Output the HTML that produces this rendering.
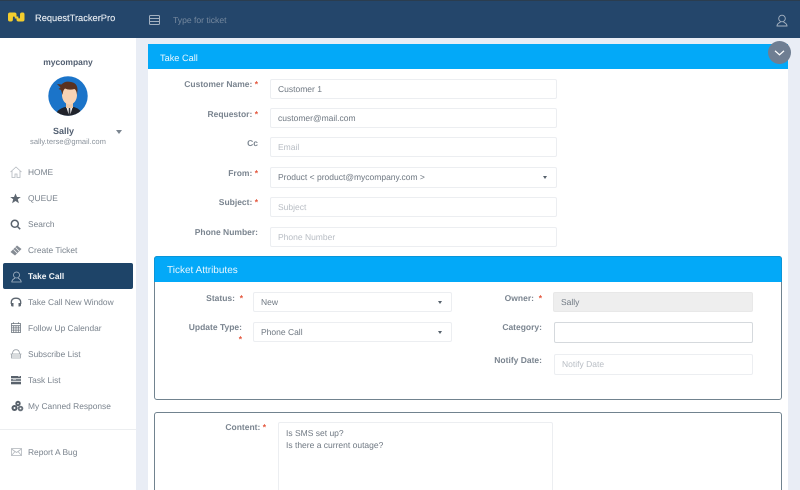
<!DOCTYPE html>
<html><head><meta charset="utf-8"><style>
*{box-sizing:border-box}
html,body{margin:0;padding:0;width:800px;height:490px;overflow:hidden;background:#e9edf5}
#w{position:relative;width:800px;height:490px;overflow:hidden;background:#e9edf5;font-family:"Liberation Sans","DejaVu Sans",sans-serif;font-size:8.8px;color:#6b7480;text-rendering:geometricPrecision;filter:blur(.3px)}
.a{position:absolute;white-space:nowrap}
.top{left:0;top:0;width:800px;height:38px;background:#24466b;border-top:1px solid #2b3d4f}
.side{left:0;top:38px;width:136px;height:452px;background:#fff}
.nav{left:28px;color:#7a838d;line-height:12px;font-size:8.4px}
.lb{font-weight:bold;color:#7b8590;text-align:right;line-height:12px;font-size:8.5px}
.lb i{font-style:normal;color:#e4573d;font-weight:bold}
.in{background:#fff;border:1px solid #eceef1;border-radius:2px;height:20px;line-height:19px;padding-left:7px;color:#6f7882;font-size:8.5px}
.car{position:absolute;right:9px;top:8px;width:0;height:0;border-left:2.5px solid transparent;border-right:2.5px solid transparent;border-top:3px solid #55606b}
.hd{color:#e8f6fe;line-height:14px}
svg{position:absolute;overflow:visible}
</style></head><body><div id="w">
<div class="a top"></div>
<svg style="left:8px;top:12px" width="17" height="10" viewBox="0 0 17 10"><path d="M0 2.500Q0 .5 2 .5H6.500Q8.500 .5 8.500 2.500V6.500H6.800V5.500Q6.800 4.500 5.800 4.500 4.900 4.500 4.900 5.500V7.500Q4.900 9.500 3 9.500H1.800Q0 9.500 0 7.500Z" fill="#f3cd2e"/><path d="M16.500 7.500Q16.500 9.500 14.500 9.500H10.500Q8.500 9.500 8.500 7.500V4.500H10.300V5.500Q10.300 6.500 11.200 6.500 12 6.500 12 5.500V2.500Q12 .5 14 .5H14.800Q16.500 .5 16.500 2.500Z" fill="#f3cd2e"/></svg>
<div class="a" style="left:35px;top:11px;color:#e6ebf1;font-size:9.300px;line-height:14px;-webkit-text-stroke:.15px #e6ebf1">RequestTrackerPro</div>
<svg style="left:149px;top:15px" width="11" height="10" viewBox="0 0 11 10" fill="none" stroke="#a3b1c1" stroke-width="1"><rect x=".5" y=".5" width="10" height="9" rx="1"/><path d="M.5 3.500H10.500M.5 6.500H10.500"/></svg>
<div class="a" style="left:173px;top:13px;color:#76899f;font-size:8.600px;line-height:14px">Type for ticket</div>
<svg style="left:776px;top:14px" width="12" height="13" viewBox="0 0 12 13" fill="none" stroke="#a6b3c2" stroke-width=".9"><circle cx="6" cy="4.500" r="3.300"/><path d="M4.500 8C3 9 1 9.500 1 12H11C11 9.500 9 9 7.500 8"/></svg>

<div class="a side"></div>
<div class="a" style="left:0;width:136px;text-align:center;top:56px;font-weight:bold;color:#525f71;font-size:8.500px;line-height:12px">mycompany</div>
<svg style="left:48px;top:76px" width="40" height="40" viewBox="0 0 40 40"><defs><clipPath id="c"><circle cx="20" cy="20" r="19.700"/></clipPath></defs><circle cx="20" cy="20" r="19.700" fill="#1b74c9"/><g clip-path="url(#c)"><path d="M7 40Q9 33 17 31H26Q33 33 35 40Z" fill="#21232b"/><path d="M18 30H25L22.500 38H20.500Z" fill="#f0f0f0"/><path d="M20.800 32H22.200L22.500 40H20.500Z" fill="#30343c"/><rect x="18" y="24" width="7" height="8" fill="#eec9a8"/><ellipse cx="21.500" cy="19" rx="7.500" ry="9.500" fill="#f7d3b5"/><path d="M9 8L13.500 8.500Q17 4.500 23 6 29.500 7 29.500 14L29 19Q28.500 14 26.500 13 21 14.500 17 12.500 15 14 14.500 19L13 14 10.500 13 12.500 11.500Z" fill="#5a3220"/></g></svg>
<div class="a" style="left:0;width:127px;text-align:center;top:125px;font-weight:bold;color:#525f71;font-size:9px;line-height:12px">Sally</div>
<div class="a" style="left:116px;top:130px;width:0;height:0;border-left:3px solid transparent;border-right:3px solid transparent;border-top:4px solid #7b8590"></div>
<div class="a" style="left:0;width:136px;text-align:center;top:136px;color:#8b939c;font-size:7.600px;line-height:12px">sally.terse@gmail.com</div>

<div class="a" style="left:3px;top:263px;width:130px;height:26px;background:#1e4468;border-radius:2px"></div>
<div class="a nav" style="top:166px">HOME</div>
<div class="a nav" style="top:192px">QUEUE</div>
<div class="a nav" style="top:218px">Search</div>
<div class="a nav" style="top:244px">Create Ticket</div>
<div class="a nav" style="top:270px;color:#f1f4f7;font-weight:bold">Take Call</div>
<div class="a nav" style="top:296px">Take Call New Window</div>
<div class="a nav" style="top:322px">Follow Up Calendar</div>
<div class="a nav" style="top:348px">Subscribe List</div>
<div class="a nav" style="top:374px">Task List</div>
<div class="a nav" style="top:400px">My Canned Response</div>
<div class="a" style="left:0;top:429px;width:136px;height:1px;background:#eceef0"></div>
<div class="a nav" style="top:446px">Report A Bug</div>

<svg style="left:10px;top:166px" width="12" height="12" viewBox="0 0 12 12" fill="none" stroke="#b3b8be" stroke-width=".8"><path d="M.5 6L6 1 11.500 6M2 5V11.500H5V8H7V11.500H10V5"/></svg>
<svg style="left:10px;top:193px" width="11" height="11" viewBox="0 0 11 11"><path d="M5.500 .5L7 4H10.800L7.800 6.300 8.900 10.300 5.500 8 2.100 10.300 3.200 6.300 .2 4H4Z" fill="#5d6670"/></svg>
<svg style="left:10px;top:219px" width="11" height="11" viewBox="0 0 11 11" fill="none" stroke="#59626c" stroke-width="1.500"><circle cx="4.800" cy="4.800" r="3.500"/><path d="M7.500 7.500L10.200 10.200"/></svg>
<svg style="left:10px;top:245px" width="12" height="11" viewBox="0 0 12 11"><path d="M.5 7L7 .5 11.500 4 5 10.500Z" fill="#858c94"/><path d="M3.500 4.500L7 8M5.500 2.500L9 6" stroke="#fff" stroke-width=".7"/></svg>
<svg style="left:11px;top:271px" width="11" height="12" viewBox="0 0 11 12" fill="none" stroke="#a9b8c8" stroke-width=".8"><circle cx="5.500" cy="4" r="3"/><path d="M4 7C3 8 .8 8.500 .8 11H10.200C10.200 8.500 8 8 7 7"/></svg>
<svg style="left:10px;top:297px" width="12" height="11" viewBox="0 0 12 11" fill="none" stroke="#5c656f" stroke-width="1.300"><path d="M1.300 7V5.500Q1.300 1.200 6 1.200 10.700 1.200 10.700 5.500V7"/><path d="M1 6H3.500V9.500H2.500Q1 9.500 1 8ZM11 6H8.500V9.500H9.500Q11 9.500 11 8Z" fill="#5c656f" stroke="none"/></svg>
<svg style="left:11px;top:322px" width="10" height="11" viewBox="0 0 10 11" fill="none" stroke="#6f7780" stroke-width=".8"><rect x=".5" y="1.500" width="9" height="9"/><path d="M.5 3.700H9.500M.5 5.900H9.500M.5 8.100H9.500M2.700 3.700V10.500M5 3.700V10.500M7.300 3.700V10.500M2.500 .3V2M7.500 .3V2"/></svg>
<svg style="left:10px;top:349px" width="12" height="10" viewBox="0 0 12 10" fill="none" stroke="#9aa1a8" stroke-width=".8"><path d="M2.500 5Q2.500 .7 6 .7 9.500 .7 9.500 5M.5 5H11.500M1.500 5V9H10.500V5M1.500 7H10.500"/></svg>
<svg style="left:10px;top:375px" width="12" height="10" viewBox="0 0 12 10"><rect x="1" y="1" width="10" height="2.300" fill="#59626c"/><rect x="1" y="4" width="10" height="2.300" fill="#7b838c"/><rect x="1" y="7" width="10" height="2.300" fill="#59626c"/><path d="M8 1.500H10M3 4.800H6" stroke="#fff" stroke-width=".5"/></svg>
<svg style="left:11px;top:400px" width="13" height="12" viewBox="0 0 13 12"><circle cx="7" cy="3.500" r="2.700" fill="#555e68"/><circle cx="3.500" cy="8" r="3" fill="#555e68"/><circle cx="9.500" cy="8.500" r="2.800" fill="#68717a"/><circle cx="3.500" cy="8" r="1" fill="#fff"/><circle cx="9.500" cy="8.500" r=".9" fill="#fff"/><circle cx="7" cy="3.500" r=".8" fill="#fff"/></svg>
<svg style="left:11px;top:448px" width="11" height="8" viewBox="0 0 11 8" fill="none" stroke="#b3b8be" stroke-width=".8"><rect x=".5" y=".5" width="10" height="7"/><path d="M.5 1L5.500 4.500 10.500 1M.5 7.500L4 3.500M10.500 7.500L7 3.500"/></svg>

<div class="a" style="left:148px;top:44px;width:640px;height:446px;background:#fff"></div>
<div class="a" style="left:148px;top:44px;width:640px;height:25px;background:#03a9f8"></div>
<div class="a hd" style="left:160px;top:51px;font-size:9.200px">Take Call</div>

<div class="a lb" style="left:150px;width:108px;top:78px">Customer Name: <i>*</i></div>
<div class="a in" style="left:270px;top:79px;width:287px">Customer 1</div>
<div class="a lb" style="left:150px;width:108px;top:108px">Requestor: <i>*</i></div>
<div class="a in" style="left:270px;top:108px;width:287px">customer@mail.com</div>
<div class="a lb" style="left:150px;width:108px;top:137px">Cc</div>
<div class="a in" style="left:270px;top:137px;width:287px;color:#b8bdc4">Email</div>
<div class="a lb" style="left:150px;width:108px;top:167px">From: <i>*</i></div>
<div class="a in" style="left:270px;top:167px;width:287px;height:21px">Product &lt; product@mycompany.com &gt;<span class="car"></span></div>
<div class="a lb" style="left:150px;width:108px;top:196px">Subject: <i>*</i></div>
<div class="a in" style="left:270px;top:197px;width:287px;color:#b8bdc4">Subject</div>
<div class="a lb" style="left:150px;width:108px;top:226px">Phone Number:</div>
<div class="a in" style="left:270px;top:227px;width:287px;color:#b8bdc4">Phone Number</div>

<div class="a" style="left:154px;top:256px;width:628px;height:144px;background:#fff;border:1px solid #71838f;border-radius:3px"></div>
<div class="a" style="left:154px;top:256px;width:628px;height:26px;background:#03a9f8;border-radius:3px 3px 0 0;border:1px solid #0a95d8;border-bottom:0"></div>
<div class="a hd" style="left:167px;top:264px;font-size:10px">Ticket Attributes</div>

<div class="a lb" style="left:160px;width:83px;top:292px">Status: &nbsp;<i>*</i></div>
<div class="a in" style="left:253px;top:292px;width:199px">New<span class="car"></span></div>
<div class="a lb" style="left:160px;width:82px;top:321px">Update Type:</div>
<div class="a lb" style="left:160px;width:82px;top:333px"><i>*</i></div>
<div class="a in" style="left:253px;top:322px;width:199px">Phone Call<span class="car"></span></div>

<div class="a lb" style="left:470px;width:72px;top:292px">Owner: &nbsp;<i>*</i></div>
<div class="a in" style="left:553px;top:292px;width:200px;background:#eee;border-color:#e8e8e8">Sally</div>
<div class="a lb" style="left:470px;width:72px;top:321px">Category:</div>
<div class="a in" style="left:554px;top:322px;width:199px;height:21px;border-color:#d5d9dd"></div>
<div class="a lb" style="left:470px;width:72px;top:354px">Notify Date:</div>
<div class="a in" style="left:554px;top:354px;width:199px;height:21px;color:#b8bdc4">Notify Date</div>

<div class="a" style="left:154px;top:412px;width:628px;height:90px;background:#fff;border:1px solid #71838f;border-radius:3px"></div>
<div class="a lb" style="left:160px;width:106px;top:421px">Content: <i>*</i></div>
<div class="a" style="left:278px;top:422px;width:275px;height:80px;border:1px solid #eceef1;border-radius:2px;padding:4px 7px;line-height:12px;color:#6f7882;font-size:8.500px;white-space:normal">Is SMS set up?<br>Is there a current outage?</div>

<div class="a" style="left:768px;top:41px;width:23px;height:23px;border-radius:50%;background:#6f7e92"></div>
<svg style="left:774px;top:50px" width="11" height="6" viewBox="0 0 11 6" fill="none" stroke="#fff" stroke-width="1.300"><path d="M1 .8L5.500 4.800 10 .8"/></svg>
</div></body></html>
